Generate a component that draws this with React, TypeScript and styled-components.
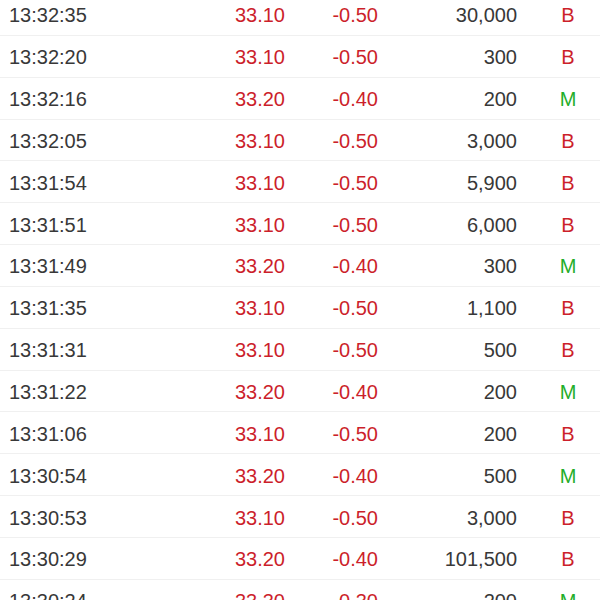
import React from "react";
import styled, { createGlobalStyle } from "styled-components";

const Global = createGlobalStyle`
  html, body { margin: 0; padding: 0; background: #ffffff; }
  body { font-family: "Liberation Sans", Arial, Helvetica, sans-serif; overflow: hidden; }
`;

const List = styled.div`
  display: flex;
  flex-direction: column;
  margin-top: -6px;
`;

const Row = styled.div`
  display: grid;
  grid-template-columns: 191px 85px 93px 139px 1fr;
  align-items: center;
  height: 41.85px;
  box-sizing: border-box;
  padding: 2px 0 0 9px;
  border-bottom: 1px solid #f0f0f0;
  font-size: 20px;
  line-height: 1;
`;

const Time = styled.span`
  color: #383838;
`;

const Num = styled.span<{ $red?: boolean }>`
  text-align: right;
  color: ${(p) => (p.$red ? "#cc1f2b" : "#383838")};
`;

const Side = styled.span<{ $kind: "B" | "M" }>`
  text-align: center;
  padding-left: 19px;
  color: ${(p) => (p.$kind === "B" ? "#cc1f2b" : "#1fae2a")};
`;

type Trade = [string, string, string, string, "B" | "M"];

const trades: Trade[] = [
  ["13:32:35", "33.10", "-0.50", "30,000", "B"],
  ["13:32:20", "33.10", "-0.50", "300", "B"],
  ["13:32:16", "33.20", "-0.40", "200", "M"],
  ["13:32:05", "33.10", "-0.50", "3,000", "B"],
  ["13:31:54", "33.10", "-0.50", "5,900", "B"],
  ["13:31:51", "33.10", "-0.50", "6,000", "B"],
  ["13:31:49", "33.20", "-0.40", "300", "M"],
  ["13:31:35", "33.10", "-0.50", "1,100", "B"],
  ["13:31:31", "33.10", "-0.50", "500", "B"],
  ["13:31:22", "33.20", "-0.40", "200", "M"],
  ["13:31:06", "33.10", "-0.50", "200", "B"],
  ["13:30:54", "33.20", "-0.40", "500", "M"],
  ["13:30:53", "33.10", "-0.50", "3,000", "B"],
  ["13:30:29", "33.20", "-0.40", "101,500", "B"],
  ["13:30:24", "33.30", "-0.30", "200", "M"],
];

export default function App() {
  return (
    <>
      <Global />
      <List>
        {trades.map(([t, p, c, v, k]) => (
          <Row key={t}>
            <Time>{t}</Time>
            <Num $red>{p}</Num>
            <Num $red>{c}</Num>
            <Num>{v}</Num>
            <Side $kind={k}>{k}</Side>
          </Row>
        ))}
      </List>
    </>
  );
}
